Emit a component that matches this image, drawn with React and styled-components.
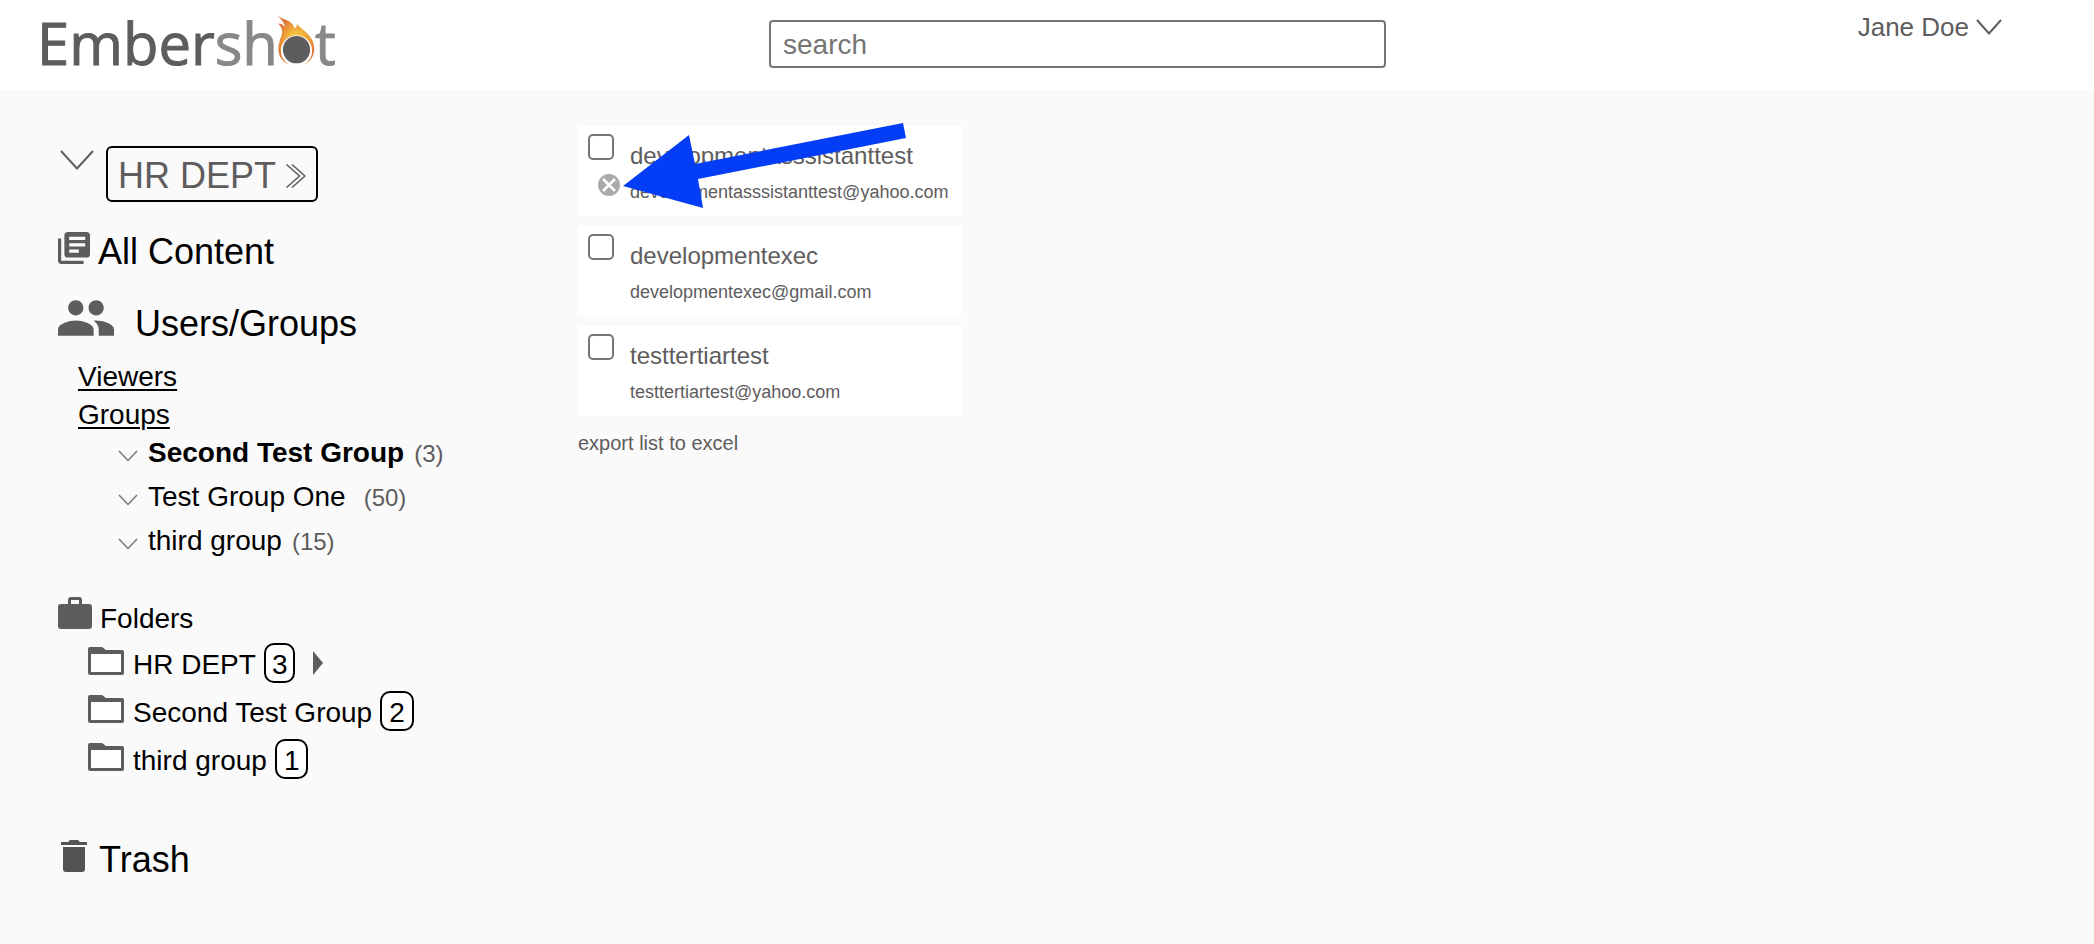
import React from 'react';
import styled, { createGlobalStyle } from 'styled-components';

const colors = {
  page: '#fafafa',
  white: '#fff',
  text: '#000',
  grey: '#5e5c5d',
  lightGrey: '#888',
  border: '#767676',
  remove: '#aaa',
  arrow: '#033df5',
};

const GlobalStyle = createGlobalStyle`
  *, *:before, *:after {
    box-sizing: border-box;
  }
  body {
    margin: 0;
    background: ${colors.page};
    color: ${colors.text};
    font-family: 'Liberation Sans', Arial, Helvetica, sans-serif;
  }
  ul {
    margin: 0;
    padding: 0;
    list-style: none;
  }
  a {
    color: inherit;
    text-decoration: none;
  }
  button {
    padding: 0;
    border: 0;
    background: none;
    color: inherit;
    font: inherit;
    cursor: pointer;
  }
  svg {
    display: block;
    flex: none;
  }
`;

const StyledHeader = styled.header`
  display: grid;
  grid-template-columns: 769fr 617fr 708fr;
  align-items: start;
  height: 90px;
  background: ${colors.white};
`;
const StyledLogo = styled.a`
  display: flex;
  align-items: flex-start;
  padding: 11px 0 0 37px;
  font-family: 'Open Sans', 'Noto Sans', sans-serif;
  font-size: 58px;
  font-weight: 500;
  line-height: 64px;
  color: ${colors.grey};
  -webkit-text-stroke: 1px currentColor;
  svg {
    margin-top: 4px;
  }
`;
const StyledLogoTail = styled.span`
  color: ${colors.lightGrey};
`;
const StyledSearch = styled.input`
  width: 100%;
  height: 48px;
  margin-top: 20px;
  padding: 2px 12px 0;
  border: 2px solid ${colors.border};
  border-radius: 4px;
  background: ${colors.white};
  color: ${colors.text};
  font: inherit;
  font-size: 28px;
  &::placeholder {
    color: #757575;
    opacity: 1;
  }
`;
const StyledUser = styled.button`
  display: flex;
  justify-self: end;
  align-items: center;
  gap: 7px;
  margin: 11px 92px 0 0;
  font-size: 26px;
  line-height: 32px;
  color: ${colors.grey};
`;

const StyledBody = styled.div`
  display: flex;
  align-items: flex-start;
`;
const StyledSidebar = styled.nav`
  flex: none;
  width: 578px;
  padding: 56px 0 64px 58px;
`;
const StyledDept = styled.div`
  display: flex;
  align-items: flex-start;
  gap: 12px;
  padding-left: 2px;
`;
const StyledDeptToggle = styled.button`
  padding-top: 4px;
`;
const StyledDeptButton = styled.button`
  display: flex;
  align-items: center;
  gap: 10px;
  height: 56px;
  padding: 8px 10px 4px;
  border: 2px solid ${colors.text};
  border-radius: 6px;
  font-size: 36px;
  line-height: 40px;
  color: ${colors.grey};
`;
const StyledSection = styled.a`
  display: flex;
  align-items: flex-start;
  gap: ${({ $gap }) => $gap}px;
  margin-top: ${({ $top }) => $top}px;
  padding-left: ${({ $indent = 0 }) => $indent}px;
  font-size: ${({ $small }) => ($small ? 28 : 36)}px;
  line-height: ${({ $small }) => ($small ? 36 : 40)}px;
  span {
    padding-top: ${({ $drop }) => ($drop ? 4 : 0)}px;
  }
`;
const StyledLinks = styled.div`
  display: flex;
  flex-direction: column;
  align-items: flex-start;
  padding: 14px 0 1px 20px;
  font-size: 28px;
  line-height: 38px;
  a {
    text-decoration: underline;
    text-decoration-thickness: 2px;
    text-underline-offset: 3px;
  }
`;
const StyledGroups = styled.ul`
  display: flex;
  flex-direction: column;
  gap: 8px;
  padding-left: 60px;
`;
const StyledGroup = styled.li`
  display: flex;
  align-items: baseline;
  height: 36px;
  font-size: 28px;
  line-height: 36px;
  a {
    margin: 0 ${({ $wide }) => ($wide ? 18 : 10)}px 0 10px;
    font-weight: ${({ $active }) => ($active ? 700 : 400)};
  }
`;
const StyledCount = styled.span`
  font-size: 24px;
  color: ${colors.grey};
`;
const StyledFolders = styled.ul`
  display: flex;
  flex-direction: column;
  gap: 8px;
  padding: 6px 0 0 30px;
`;
const StyledFolder = styled.li`
  display: flex;
  align-items: center;
  height: 40px;
  font-size: 28px;
  line-height: 36px;
  a {
    display: flex;
    align-items: flex-start;
    gap: 9px;
    padding-top: 4px;
  }
`;
const StyledBadge = styled.span`
  height: 40px;
  margin-left: 8px;
  padding: 4px ${({ $narrow }) => ($narrow ? 6 : 7)}px 0;
  border: 2px solid ${colors.text};
  border-radius: 10px;
  background: ${colors.white};
  line-height: 32px;
`;
const StyledCaret = styled.button`
  margin-left: 18px;
`;

const StyledMain = styled.main`
  padding-top: 36px;
  color: ${colors.grey};
`;
const StyledCards = styled.ul`
  display: flex;
  flex-direction: column;
  gap: 10px;
  width: 384px;
`;
const StyledCard = styled.li`
  position: relative;
  display: grid;
  grid-template-columns: 42px 1fr;
  height: 90px;
  padding: 8px 10px;
  background: ${colors.white};
`;
const StyledControls = styled.div`
  display: flex;
  flex-direction: column;
  align-items: flex-start;
  gap: 14px;
  button {
    margin-left: 10px;
  }
`;
const StyledCheckbox = styled.input`
  appearance: none;
  width: 26px;
  height: 26px;
  margin: 0;
  border: 2px solid ${colors.border};
  border-radius: 5px;
  background: ${colors.white};
  &:checked {
    background: ${colors.border};
  }
`;
const StyledName = styled.label`
  display: block;
  padding-top: 7px;
  font-size: 24px;
  line-height: 30px;
`;
const StyledEmail = styled.div`
  padding-top: 5px;
  font-size: 18px;
  line-height: 32px;
`;
const StyledArrow = styled.svg`
  position: absolute;
  top: -3px;
  left: 45px;
  pointer-events: none;
`;
const StyledExport = styled.button`
  margin-top: 15px;
  font-size: 20px;
  line-height: 24px;
`;

const Chevron = ({ width, height, color = colors.grey, stroke = 2 }) => (
  <svg width={width} height={height} viewBox={`0 0 ${width} ${height}`} fill="none">
    <path d={`M1 1L${width / 2} ${height - 1.5}L${width - 1} 1`} stroke={color} strokeWidth={stroke} />
  </svg>
);

const DoubleChevron = () => (
  <svg width="20" height="24" viewBox="0 0 20 24" fill="none" stroke={colors.grey} strokeWidth="1.5">
    <path d="M.5.5L13.500 12L.5 23.500M6 .5L19 12L6 23.500" />
  </svg>
);

const LibraryIcon = () => (
  <svg width="32" height="32" viewBox="2 2 20 20" fill={colors.grey}>
    <path d="M4 6H2v14c0 1.1.9 2 2 2h14v-2H4V6zm16-4H8c-1.1 0-2 .9-2 2v12c0 1.1.9 2 2 2h12c1.1 0 2-.9 2-2V4c0-1.1-.9-2-2-2zm-1 9H9V9h10v2zm-4 4H9v-2h6v2zm4-8H9V5h10v2z" />
  </svg>
);

const PeopleIcon = () => (
  <svg width="56" height="36" viewBox="1 5 22 14" fill={colors.grey}>
    <path d="M16 11c1.660 0 2.990-1.340 2.990-3S17.660 5 16 5c-1.660 0-3 1.340-3 3s1.340 3 3 3zm-8 0c1.660 0 2.990-1.340 2.990-3S9.660 5 8 5C6.340 5 5 6.340 5 8s1.340 3 3 3zm0 2c-2.330 0-7 1.170-7 3.500V19h14v-2.500c0-2.330-4.670-3.500-7-3.500zm8 0c-.29 0-.62.02-.97.05 1.160.84 1.970 1.970 1.970 3.450V19h6v-2.500c0-2.330-4.670-3.500-7-3.500z" />
  </svg>
);

const BriefcaseIcon = () => (
  <svg width="34" height="32" viewBox="0 0 34 32" fill={colors.grey}>
    <path
      fillRule="evenodd"
      d="M10 7V3q0-3 3-3h8q3 0 3 3v4h7q3 0 3 3v19q0 3-3 3H3q-3 0-3-3V10q0-3 3-3zM13 7h8V3h-8z"
    />
  </svg>
);

const FolderIcon = () => (
  <svg width="36" height="28" viewBox="0 0 36 28">
    <path d="M2 0h12l4 3h16q2 0 2 2v21q0 2-2 2H2q-2 0-2-2V2q0-2 2-2z" fill={colors.grey} />
    <path d="M3 7h30v18H3z" fill={colors.white} />
  </svg>
);

const TrashIcon = () => (
  <svg width="26" height="32" viewBox="0 0 26 32" fill="#535353">
    <path d="M0 2h7l2-2h8l2 2h7v3H0zM2 7h22v22q0 3-3 3H5q-3 0-3-3z" />
  </svg>
);

const RemoveIcon = () => (
  <svg width="22" height="22" viewBox="0 0 22 22">
    <circle cx="11" cy="11" r="11" fill={colors.remove} />
    <path d="M5 5l12 12M17 5L5 17" stroke={colors.white} strokeWidth="2.500" />
  </svg>
);

const Flame = () => (
  <svg width="37" height="50" viewBox="0 0 38 50">
    <defs>
      <radialGradient id="flame" cx="0.5" cy="0.55" r="0.56">
        <stop offset="0" stopColor="#fbdc4c" />
        <stop offset="0.5" stopColor="#f2b03c" />
        <stop offset="1" stopColor="#dc6b35" />
      </radialGradient>
    </defs>
    <path
      d="M0 0C5 5 15 4 17 13C19 12 20 10 19 8C24 14 31 17 35 25C40 36 36 46 27 50H11C2 46-1 38 1 29C2 23 5 19 4 15C4 12 2 10 0 8C3 8 5 9 7 12C7 7 3 4 0 0z"
      fill="url(#flame)"
    />
    <circle cx="19" cy="36" r="16" fill={colors.white} />
    <circle cx="19" cy="35" r="14" fill={colors.grey} />
  </svg>
);

const groups = [
  { name: 'Second Test Group', count: 3, active: true },
  { name: 'Test Group One', count: 50, wide: true },
  { name: 'third group', count: 15 },
];

const folders = [
  { name: 'HR DEPT', count: 3, nested: true },
  { name: 'Second Test Group', count: 2 },
  { name: 'third group', count: 1 },
];

const members = [
  { name: 'developmentasssistanttest', email: 'developmentasssistanttest@yahoo.com', removable: true },
  { name: 'developmentexec', email: 'developmentexec@gmail.com' },
  { name: 'testtertiartest', email: 'testtertiartest@yahoo.com' },
];

const Header = () => (
  <StyledHeader>
    <StyledLogo href="#home">
      <span>Ember</span>
      <StyledLogoTail>sh</StyledLogoTail>
      <Flame />
      <StyledLogoTail>t</StyledLogoTail>
    </StyledLogo>
    <StyledSearch type="search" placeholder="search" aria-label="search" />
    <StyledUser type="button">
      Jane Doe
      <Chevron width={26} height={16} />
    </StyledUser>
  </StyledHeader>
);

const Sidebar = () => (
  <StyledSidebar>
    <StyledDept>
      <StyledDeptToggle type="button" aria-label="Toggle department">
        <Chevron width={34} height={20} />
      </StyledDeptToggle>
      <StyledDeptButton type="button">
        HR DEPT
        <DoubleChevron />
      </StyledDeptButton>
    </StyledDept>

    <StyledSection href="#content" $top={30} $gap={8}>
      <LibraryIcon />
      <span>All Content</span>
    </StyledSection>

    <StyledSection href="#users" $top={28} $gap={21} $drop>
      <PeopleIcon />
      <span>Users/Groups</span>
    </StyledSection>
    <StyledLinks>
      <a href="#viewers">Viewers</a>
      <a href="#groups">Groups</a>
    </StyledLinks>
    <StyledGroups>
      {groups.map(({ name, count, active, wide }) => (
        <StyledGroup key={name} $active={active} $wide={wide}>
          <button type="button" aria-label={`Options for ${name}`}>
            <Chevron width={20} height={12} color="#777" stroke={1.5} />
          </button>
          <a href="#group">{name}</a>
          <StyledCount>({count})</StyledCount>
        </StyledGroup>
      ))}
    </StyledGroups>

    <StyledSection href="#folders" $top={38} $gap={8} $small $drop>
      <BriefcaseIcon />
      <span>Folders</span>
    </StyledSection>
    <StyledFolders>
      {folders.map(({ name, count, nested }) => (
        <StyledFolder key={name}>
          <a href="#folder">
            <FolderIcon />
            {name}
          </a>
          <StyledBadge $narrow={nested}>{count}</StyledBadge>
          {nested && (
            <StyledCaret type="button" aria-label={`Expand ${name}`}>
              <svg width="10" height="24" viewBox="0 0 10 24" fill={colors.grey}>
                <path d="M0 0l10 12L0 24z" />
              </svg>
            </StyledCaret>
          )}
        </StyledFolder>
      ))}
    </StyledFolders>

    <StyledSection href="#trash" $top={61} $gap={12} $indent={3}>
      <TrashIcon />
      <span>Trash</span>
    </StyledSection>
  </StyledSidebar>
);

const App = () => (
  <>
    <GlobalStyle />
    <Header />
    <StyledBody>
      <Sidebar />
      <StyledMain>
        <StyledCards>
          {members.map(({ name, email, removable }) => (
            <StyledCard key={name}>
              <StyledControls>
                <StyledCheckbox type="checkbox" id={name} />
                {removable && (
                  <button type="button" aria-label={`Remove ${name}`}>
                    <RemoveIcon />
                  </button>
                )}
              </StyledControls>
              <div>
                <StyledName htmlFor={name}>{name}</StyledName>
                <StyledEmail>{email}</StyledEmail>
              </div>
              {removable && (
                <StyledArrow width="284" height="86" viewBox="0 0 284 86" fill={colors.arrow}>
                  <path d="M0 63L66 12L72 41L280 0L283 15L75 56L80 85z" />
                </StyledArrow>
              )}
            </StyledCard>
          ))}
        </StyledCards>
        <StyledExport type="button">export list to excel</StyledExport>
      </StyledMain>
    </StyledBody>
  </>
);

export default App;
